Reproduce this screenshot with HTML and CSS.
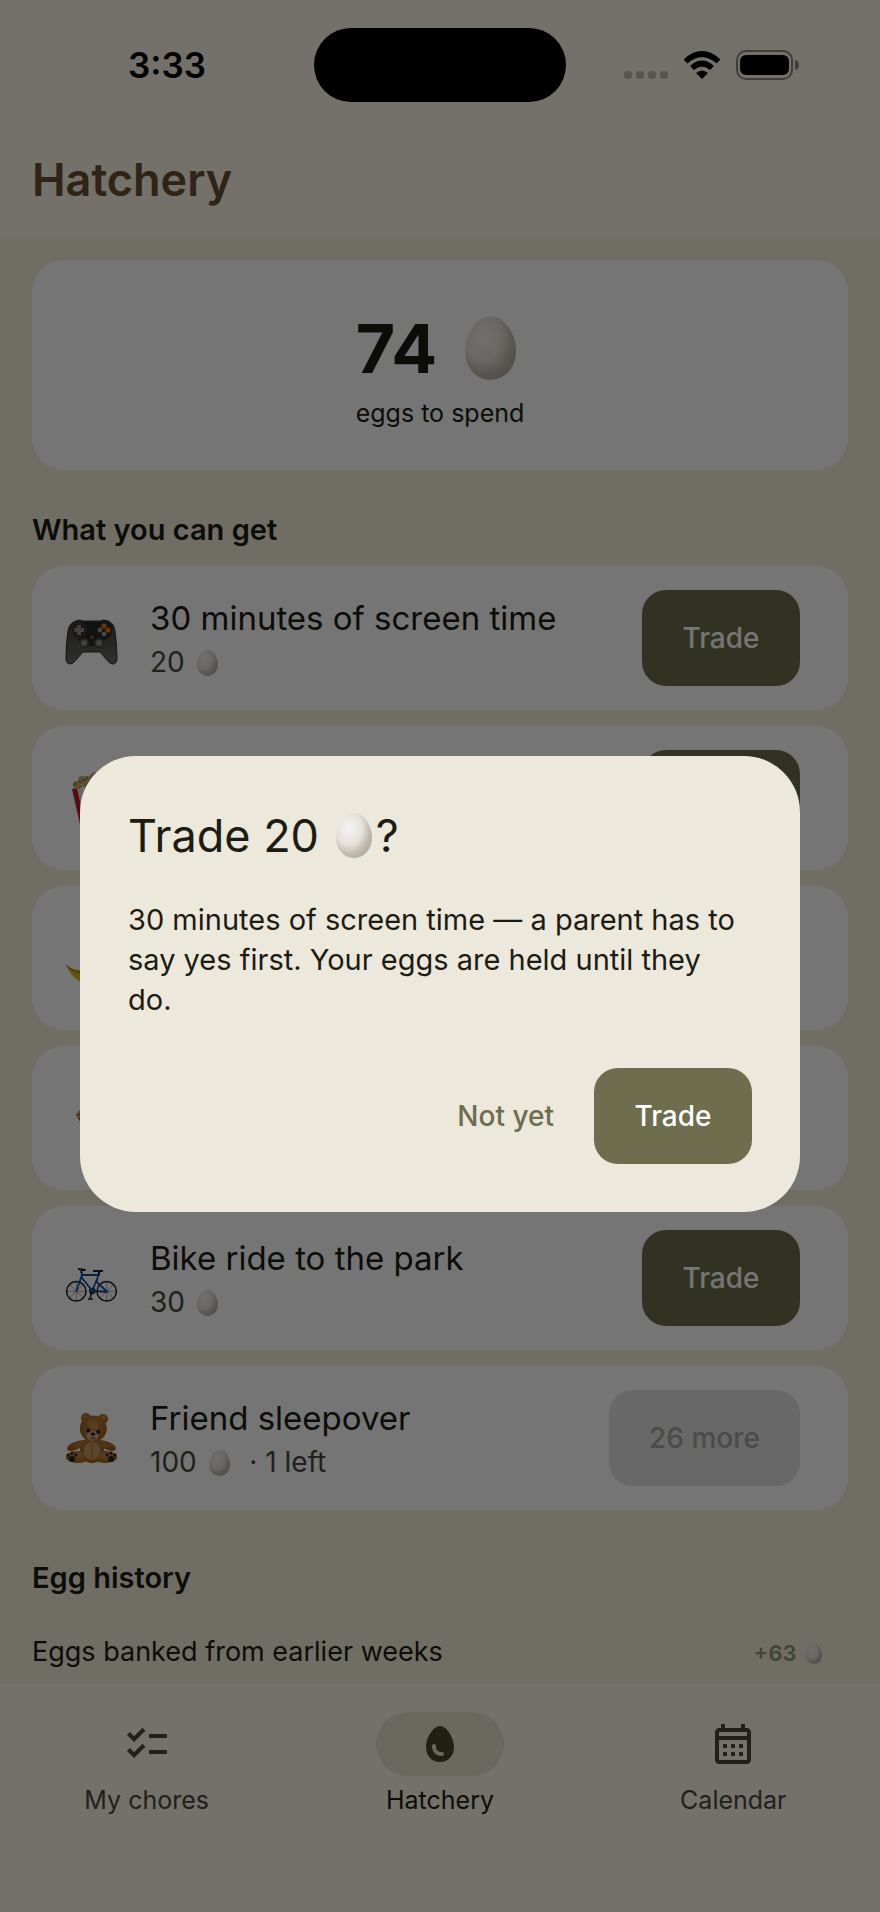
FILE: index.html
```html
<!DOCTYPE html>
<html lang="en">
<head>
    <meta charset="UTF-8">
    <meta name="viewport" content="width=device-width, initial-scale=1.0">
    <title>Hatchery</title>
    <link rel="stylesheet" href="styles.css">
</head>
<body>
    <!-- Shared shapes -->
    <svg class="defs" width="0" height="0" aria-hidden="true">
        <defs>
            <radialGradient id="egg-fill" cx="0.36" cy="0.34" r="0.72">
                <stop offset="0" stop-color="#f6f4f1"/>
                <stop offset="0.5" stop-color="#e6e2dc"/>
                <stop offset="0.8" stop-color="#c2bab0"/>
                <stop offset="1" stop-color="#b2a99f"/>
            </radialGradient>
            <linearGradient id="pad-fill" x1="0" y1="0" x2="0" y2="1">
                <stop offset="0" stop-color="#3c3c3c"/>
                <stop offset="1" stop-color="#686864"/>
            </linearGradient>
            <radialGradient id="fur" cx="0.5" cy="0.4" r="0.6">
                <stop offset="0" stop-color="#c98c48"/>
                <stop offset="1" stop-color="#985a1c"/>
            </radialGradient>
            <symbol id="egg" viewBox="0 0 40 50">
                <path fill="url(#egg-fill)" d="M20 0C31 0 40 14 40 27C40 41 31 50 20 50S0 41 0 27C0 14 9 0 20 0Z"/>
            </symbol>
        </defs>
    </svg>

    <div class="app">
        <header>
            <div class="status-bar">
                <span class="time">3:33</span>
                <div class="island"></div>
                <div class="indicators">
                    <svg width="44" height="28" viewBox="0 0 44 28" fill="#c0bab0">
                        <rect x="0" y="20" width="8" height="8" rx="3"/>
                        <rect x="12" y="20" width="8" height="8" rx="3"/>
                        <rect x="24" y="20" width="8" height="8" rx="3"/>
                        <rect x="36" y="20" width="8" height="8" rx="3"/>
                    </svg>
                    <svg width="38" height="28" viewBox="0 0 38 28">
                        <path d="M19 28L13 22Q19 17 25 22Z"/>
                        <path d="M9 17Q19 8 29 17M2.500 10.500Q19 -4.500 35.500 10.500" fill="none" stroke="#000" stroke-width="5.600"/>
                    </svg>
                    <svg width="64" height="30" viewBox="0 0 64 30">
                        <rect x="1" y="1" width="55" height="28" rx="9" fill="none" stroke="#8b877f" stroke-width="2"/>
                        <rect x="4" y="5" width="49" height="20" rx="6"/>
                        <path d="M59 10Q63 11 63 15T59 20Z" fill="#8b877f"/>
                    </svg>
                </div>
            </div>
            <h1>Hatchery</h1>
        </header>

        <main>
            <section class="balance">
                <div>
                    <p class="balance-count">74 <svg class="egg-large"><use href="#egg"/></svg></p>
                    <p class="balance-label">eggs to spend</p>
                </div>
            </section>

            <h2>What you can get</h2>
            <ul class="rewards">
                <li class="reward">
                    <svg class="art" viewBox="0 0 56 56">
                        <path fill="url(#pad-fill)" stroke="#2b2b2b" d="M12 11Q15 9 19 11H36Q40 9 44 11Q50 13 51 21Q53 35 53 48Q53 54 49 54Q46 54 43 50L36 42H19L12 50Q9 54 6 54Q2 54 2 48Q2 33 4 21Q5 13 12 11Z"/>
                        <path fill="#272827" d="M12 12H44Q49 15 48 23Q46 28 40 30Q39 38 34 38L29 36H26L21 38Q15 37 15 30Q8 27 7 21Q7 15 12 12Z"/>
                        <circle cx="15" cy="20" r="7.500" fill="#333" stroke="#7a3c1c"/>
                        <path stroke="#8b8b88" stroke-width="4" d="M15 15V25M10 20H20"/>
                        <circle cx="40" cy="16" r="2.600" fill="#ff7000"/>
                        <circle cx="44" cy="20" r="2.600" fill="#ff7000"/>
                        <circle cx="36" cy="20" r="2.400" fill="#999"/>
                        <circle cx="40" cy="24" r="2.400" fill="#999"/>
                        <circle cx="20" cy="33" r="4" fill="#8c8c8a" stroke="#4c4c4a" stroke-width="2"/>
                        <circle cx="35" cy="33" r="4" fill="#8c8c8a" stroke="#4c4c4a" stroke-width="2"/>
                        <circle cx="27.700" cy="27.300" r="1.600" fill="#b65a20"/>
                    </svg>
                    <div class="reward-text">
                        <h3>30 minutes of screen time</h3>
                        <p>20 <svg class="egg-small"><use href="#egg"/></svg></p>
                    </div>
                    <button class="btn" type="button">Trade</button>
                </li>
                <li class="reward">
                    <svg class="art" viewBox="0 0 56 56">
                        <path fill="#e8e2e0" d="M8 19H48L41 54H16Z"/>
                        <path fill="#c0182a" d="M8 19L13 18L21 54H16ZM22 19H27L28 54H25ZM34 19H40L35 54H31Z"/>
                        <g fill="#c4ac70">
                            <circle cx="13" cy="15" r="4"/>
                            <circle cx="18" cy="10" r="4"/>
                            <circle cx="23" cy="12" r="6"/>
                            <circle cx="32" cy="9" r="7"/>
                            <circle cx="42" cy="14" r="5"/>
                        </g>
                        <path fill="none" stroke="#8c6430" stroke-width="1.400" d="M10 15L12 13M15 18L18 16M18 11L21 9M15 11L17 13M22 7L24 9"/>
                    </svg>
                    <button class="btn" type="button" aria-label="Trade"></button>
                </li>
                <li class="reward">
                    <svg class="art" viewBox="0 0 56 56">
                        <path fill="#d8b020" d="M2 35Q12 43 24 38Q40 31 44 8L49 7Q54 34 38 47Q28 54 16 51Q7 47 2 35Z"/>
                        <path fill="none" stroke="#8c741c" d="M2 35Q10 43 20 43"/>
                    </svg>
                </li>
                <li class="reward">
                    <svg class="art" viewBox="0 0 56 56">
                        <path fill="#8c6838" d="M12 25L18 18L44 18L48 26L42 48L24 42L15 30Z"/>
                        <path fill="none" stroke="#c8b080" stroke-width="1.600" d="M13 24L17 20M14 27L18 25"/>
                    </svg>
                </li>
                <li class="reward">
                    <svg class="art" viewBox="0 0 56 56" fill="none">
                        <g stroke="#77756f" stroke-width="0.600">
                            <path d="M2 41.300H22M12.300 31V51M5 34L19.500 48.500M19.500 34L5 48.500"/>
                            <path d="M32.500 41.300H53M42.700 31V51M35.500 34L50 48.500M50 34L35.500 48.500"/>
                        </g>
                        <g stroke="#1b1b1b" stroke-width="1.500">
                            <circle cx="12.300" cy="41.300" r="9.700"/>
                            <circle cx="42.700" cy="41.300" r="9.700"/>
                            <path d="M28.300 41L26 48M24 49H29M28.300 41L42.700 42"/>
                            <circle cx="28.300" cy="41" r="2.500"/>
                        </g>
                        <path stroke="#0e4fa8" stroke-width="1.800" d="M12.300 41.300L18 25M17.500 22L18 28L28.300 40.700L34.700 25H18M34.700 24L32.500 32L42.700 41.300H28.300"/>
                        <path stroke="#222" stroke-width="2" d="M14 19L21.700 20M17.500 19V23M29 21H39M35 21V25"/>
                    </svg>
                    <div class="reward-text">
                        <h3>Bike ride to the park</h3>
                        <p>30 <svg class="egg-small"><use href="#egg"/></svg></p>
                    </div>
                    <button class="btn" type="button">Trade</button>
                </li>
                <li class="reward">
                    <svg class="art" viewBox="0 0 56 56">
                        <g fill="url(#fur)">
                            <circle cx="22" cy="8" r="5"/>
                            <circle cx="39" cy="9" r="5"/>
                            <path d="M20 30Q4 32 3 39Q5 44 18 37ZM36 30Q51 32 52 39Q50 44 37 37Z"/>
                            <ellipse cx="28" cy="40" rx="12" ry="13"/>
                            <ellipse cx="14" cy="47" rx="12" ry="6"/>
                            <ellipse cx="41" cy="47" rx="12" ry="6"/>
                            <ellipse cx="29.300" cy="18.500" rx="13.500" ry="13"/>
                        </g>
                        <ellipse cx="28" cy="41" rx="8" ry="9" fill="#c59a60"/>
                        <path stroke="#94642e" stroke-width="0.800" fill="none" d="M28 32V50M24 7Q20 14 24 19M35 7Q38 14 36 20"/>
                        <ellipse cx="28.500" cy="26" rx="6" ry="5" fill="#d0aa78"/>
                        <g fill="#252120">
                            <circle cx="24.300" cy="20.500" r="2"/>
                            <circle cx="34.300" cy="21.800" r="2"/>
                            <ellipse cx="29" cy="24" rx="2.400" ry="1.600"/>
                            <circle cx="8" cy="49" r="3"/>
                            <circle cx="47" cy="49" r="3"/>
                            <circle cx="4" cy="45" r="1.500"/>
                            <circle cx="8" cy="43" r="1.500"/>
                            <circle cx="12" cy="45" r="1.500"/>
                            <circle cx="43" cy="45" r="1.500"/>
                            <circle cx="47" cy="43" r="1.500"/>
                            <circle cx="51" cy="45" r="1.500"/>
                        </g>
                        <path stroke="#4c3018" stroke-width="0.800" fill="none" d="M29 25V28M26 28Q29 30 32 28"/>
                    </svg>
                    <div class="reward-text">
                        <h3>Friend sleepover</h3>
                        <p>100 <svg class="egg-small"><use href="#egg"/></svg> &nbsp;· 1 left</p>
                    </div>
                    <button class="btn" type="button" disabled>26 more</button>
                </li>
            </ul>

            <h2 class="history-title">Egg history</h2>
            <div class="history-row">
                <span>Eggs banked from earlier weeks</span>
                <span class="gain">+63 <svg class="egg-tiny"><use href="#egg"/></svg></span>
            </div>
        </main>

        <nav>
            <a href="#chores">
                <span class="nav-icon">
                    <svg width="48" height="48" viewBox="0 0 24 24">
                        <path d="M22 7h-9v2h9V7zm0 8h-9v2h9v-2zM5.540 11L2 7.460l1.410-1.410 2.120 2.120 4.240-4.240 1.410 1.410L5.540 11zm0 8L2 15.460l1.410-1.410 2.120 2.120 4.240-4.240 1.410 1.410L5.540 19z"/>
                    </svg>
                </span>
                My chores
            </a>
            <a href="#hatchery" class="active">
                <span class="nav-icon">
                    <svg width="48" height="48" viewBox="0 0 24 24">
                        <path d="M12 3C8.500 3 5 9 5 13.500C5 18 8 21 12 21S19 18 19 13.500C19 9 15.500 3 12 3zm1 15c-3 0-5-2-5-5 0-.550.450-1 1-1s1 .450 1 1c0 2 1 3 3 3 .550 0 1 .450 1 1s-.450 1-1 1z"/>
                    </svg>
                </span>
                Hatchery
            </a>
            <a href="#calendar">
                <span class="nav-icon">
                    <svg width="48" height="48" viewBox="0 0 24 24">
                        <path d="M19 4h-1V2h-2v2H8V2H6v2H5c-1.110 0-1.990.900-1.990 2L3 20c0 1.100.890 2 2 2h14c1.100 0 2-.900 2-2V6c0-1.100-.900-2-2-2zm0 16H5V10h14v10zm0-12H5V6h14v2zM9 14H7v-2h2v2zm4 0h-2v-2h2v2zm4 0h-2v-2h2v2zm-8 4H7v-2h2v2zm4 0h-2v-2h2v2zm4 0h-2v-2h2v2z"/>
                    </svg>
                </span>
                Calendar
            </a>
        </nav>
    </div>

    <!-- Trade confirmation -->
    <div class="scrim">
        <div class="dialog" role="dialog" aria-modal="true" aria-labelledby="dialog-title">
            <h2 id="dialog-title">Trade 20 <svg class="egg-medium"><use href="#egg"/></svg>?</h2>
            <p>30 minutes of screen time — a parent has to say yes first. Your eggs are held until they do.</p>
            <div class="dialog-actions">
                <button class="btn btn-text" type="button">Not yet</button>
                <button class="btn" type="button">Trade</button>
            </div>
        </div>
    </div>
</body>
</html>
```
FILE: styles.css
```css
:root {
    --page-color: #f5eddc;
    --bar-color: #fcf4e8;
    --card-color: #ffffff;
    --dialog-color: #ece8db;
    --primary-color: #6e6d4e;
    --text-color: #1c1c14;
    --muted-color: #47483b;
    --title-color: #685034;
}

* {
    margin: 0;
    padding: 0;
    box-sizing: border-box;
}

body {
    background-color: var(--page-color);
    color: var(--text-color);
    font-family: Inter, 'Liberation Sans', sans-serif;
}

.defs {
    position: absolute;
}

.app {
    height: 100vh;
    display: flex;
    flex-direction: column;
}

header {
    background-color: var(--bar-color);
}

.status-bar {
    display: grid;
    grid-template-columns: 1fr auto 1fr;
    align-items: center;
    height: 130px;
}

.time {
    padding-left: 128px;
    font-size: 35px;
    font-weight: 600;
    color: #000;
}

.island {
    width: 252px;
    height: 74px;
    border-radius: 37px;
    background-color: #000;
}

.indicators {
    display: flex;
    align-items: center;
    gap: 15px;
    padding-left: 58px;
}

h1 {
    padding: 22px 32px 30px;
    font-size: 45px;
    line-height: 56px;
    font-weight: 600;
    color: var(--title-color);
}

main {
    flex: 1;
    min-height: 0;
    overflow: hidden;
    padding: 22px 32px 0;
}

.balance {
    display: flex;
    justify-content: center;
    padding: 40px;
    border-radius: 32px;
    background-color: var(--card-color);
}

.balance-count {
    display: flex;
    align-items: center;
    gap: 28px;
    font-size: 68px;
    line-height: 96px;
    font-weight: 700;
}

.balance-label {
    font-size: 25px;
    line-height: 34px;
}

h2 {
    margin: 40px 0 16px;
    font-size: 29px;
    line-height: 40px;
    font-weight: 600;
}

.rewards {
    display: flex;
    flex-direction: column;
    gap: 16px;
    list-style: none;
}

.reward {
    display: flex;
    align-items: center;
    min-height: 144px;
    padding: 24px 48px 24px 32px;
    border-radius: 32px;
    background-color: var(--card-color);
}

.art {
    width: 56px;
    height: 56px;
    margin-right: 30px;
}

.reward h3 {
    font-size: 33px;
    line-height: 48px;
    font-weight: 400;
}

.reward p {
    font-size: 28px;
    line-height: 40px;
    color: var(--muted-color);
}

.egg-large {
    width: 51px;
    height: 64px;
}

.egg-medium {
    width: 36px;
    height: 45px;
    margin: 0 4px;
    vertical-align: -6px;
}

.egg-small {
    width: 21px;
    height: 26px;
    margin: 0 4px;
    vertical-align: -4px;
}

.egg-tiny {
    width: 16px;
    height: 20px;
    margin-left: 4px;
    vertical-align: -3px;
}

.btn {
    height: 96px;
    min-width: 158px;
    margin-left: auto;
    padding: 0 40px;
    border: none;
    border-radius: 24px;
    background-color: var(--primary-color);
    color: #fff;
    font-family: inherit;
    font-size: 28px;
    font-weight: 500;
    cursor: pointer;
}

.btn:disabled {
    background-color: #e3e3e2;
    color: #a3a3a0;
    cursor: default;
}

.history-title {
    margin-top: 48px;
}

.history-row {
    display: flex;
    justify-content: space-between;
    align-items: baseline;
    padding: 18px 26px 18px 0;
    font-size: 27px;
    line-height: 40px;
}

.gain {
    font-size: 22px;
    font-weight: 600;
    color: #8a9a78;
}

nav {
    display: flex;
    height: 228px;
    padding-top: 28px;
    background-color: var(--bar-color);
}

nav a {
    flex: 1;
    display: flex;
    flex-direction: column;
    align-items: center;
    gap: 8px;
    font-size: 25px;
    line-height: 32px;
    color: var(--muted-color);
    fill: var(--muted-color);
    text-decoration: none;
}

nav a.active {
    color: var(--text-color);
    fill: #484726;
}

.nav-icon {
    display: flex;
    justify-content: center;
    align-items: center;
    width: 128px;
    height: 64px;
    border-radius: 32px;
}

.active .nav-icon {
    background-color: #e9e2d1;
}

.scrim {
    position: fixed;
    inset: 0;
    display: flex;
    align-items: center;
    padding: 120px 80px 64px;
    background-color: rgba(0, 0, 0, 0.54);
}

.dialog {
    width: 100%;
    padding: 48px;
    border-radius: 56px;
    background-color: var(--dialog-color);
}

.dialog h2 {
    margin: 0 0 32px;
    font-size: 45px;
    line-height: 64px;
    font-weight: 400;
}

.dialog p {
    padding-right: 16px;
    font-size: 29px;
    line-height: 40px;
}

.dialog-actions {
    display: flex;
    justify-content: flex-end;
    margin-top: 48px;
}

.dialog-actions .btn {
    margin-left: 0;
}

.dialog-actions .btn-text {
    background-color: transparent;
    color: var(--primary-color);
}
```
